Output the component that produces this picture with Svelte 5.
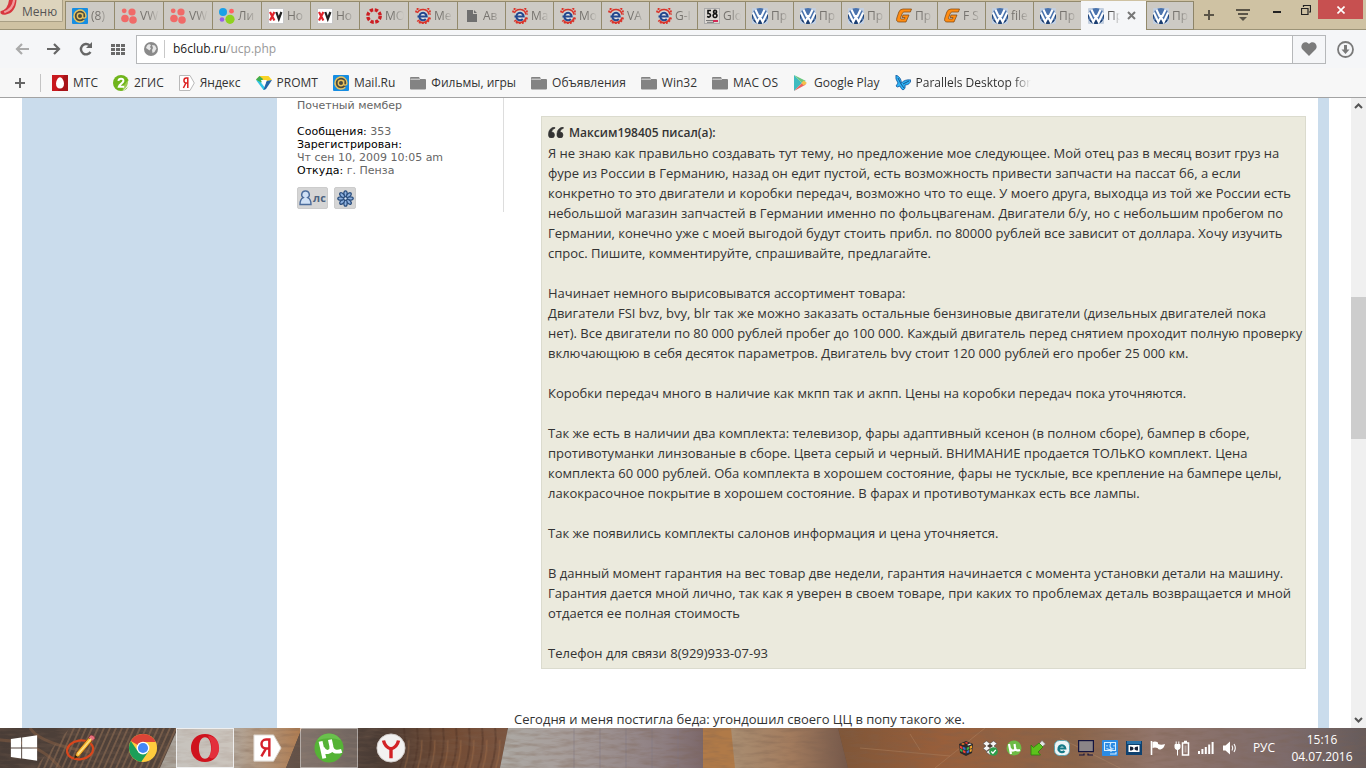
<script>
  const tabs = [
    { icon: 'mail', title: '(8)', wide: true },
    { icon: 'dots', title: 'VW', wide: true },
    { icon: 'dots', title: 'VW', wide: true },
    { icon: 'avito', title: 'Ли', wide: true },
    { icon: 'xv', title: 'Но', wide: true },
    { icon: 'xv', title: 'Но', wide: true },
    { icon: 'ring', title: 'МО', wide: true },
    { icon: 'exist', title: 'Ме', wide: true },
    { icon: 'doc', title: 'Ав' },
    { icon: 'exist', title: 'Ма' },
    { icon: 'exist', title: 'Мо' },
    { icon: 'exist', title: 'VA' },
    { icon: 'exist', title: 'G-I' },
    { icon: 'auto58', title: 'Glo' },
    { icon: 'vw', title: 'Пр' },
    { icon: 'vw', title: 'Пр' },
    { icon: 'vw', title: 'Пр' },
    { icon: 'g', title: 'Пр' },
    { icon: 'g', title: 'F S' },
    { icon: 'vw', title: 'file' },
    { icon: 'vw', title: 'Пр' },
    { icon: 'vw', title: 'Пр', active: true },
    { icon: 'vw', title: 'Пр' }
  ];
  const bookmarks = [
    ['mts', 'МТС'], ['gis', '2ГИС'], ['yandex', 'Яндекс'], ['promt', 'PROMT'],
    ['mail', 'Mail.Ru'], ['folder', 'Фильмы, игры'], ['folder', 'Объявления'],
    ['folder', 'Win32'], ['folder', 'MAC OS'], ['play', 'Google Play'],
    ['butterfly', 'Parallels Desktop for']
  ];
  const paragraphs = [
    'Я не знаю как правильно создавать тут тему, но предложение мое следующее. Мой отец раз в месяц возит груз на\nфуре из России в Германию, назад он едит пустой, есть возможность привести запчасти на пассат б6, а если\nконкретно то это двигатели и коробки передач, возможно что то еще. У моего друга, выходца из той же России есть\nнебольшой магазин запчастей в Германии именно по фольцвагенам. Двигатели б/у, но с небольшим пробегом по\nГермании, конечно уже с моей выгодой будут стоить прибл. по 80000 рублей все зависит от доллара. Хочу изучить\nспрос. Пишите, комментируйте, спрашивайте, предлагайте.',
    'Начинает немного вырисовыватся ассортимент товара:\nДвигатели FSI bvz, bvy, blr так же можно заказать остальные бензиновые двигатели (дизельных двигателей пока\nнет). Все двигатели по 80 000 рублей пробег до 100 000. Каждый двигатель перед снятием проходит полную проверку\nвключающюю в себя десяток параметров. Двигатель bvy стоит 120 000 рублей его пробег 25 000 км.',
    'Коробки передач много в наличие как мкпп так и акпп. Цены на коробки передач пока уточняются.',
    'Так же есть в наличии два комплекта: телевизор, фары адаптивный ксенон (в полном сборе), бампер в сборе,\nпротивотуманки линзованые в сборе. Цвета серый и черный. ВНИМАНИЕ продается ТОЛЬКО комплект. Цена\nкомплекта 60 000 рублей. Оба комплекта в хорошем состояние, фары не тусклые, все крепление на бампере целы,\nлакокрасочное покрытие в хорошем состояние. В фарах и противотуманках есть все лампы.',
    'Так же появились комплекты салонов информация и цена уточняется.',
    'В данный момент гарантия на вес товар две недели, гарантия начинается с момента установки детали на машину.\nГарантия дается мной лично, так как я уверен в своем товаре, при каких то проблемах деталь возвращается и мной\nотдается ее полная стоимость',
    'Телефон для связи 8(929)933-07-93'
  ];
  const tray = ['cube', 'dropbox', 'ut', 'usb', 'eset', 'screen', 'finder', 'dolby', 'flag', 'power', 'signal', 'sound'];
  const apps = [
    ['start', 'Пуск'], ['pencil', 'Рисование'], ['chrome', 'Chrome'], ['opera', 'Opera'],
    ['yabig', 'Яндекс'], ['utorrent', 'µTorrent'], ['yabrowser', 'Яндекс.Браузер']
  ];
  let address = $state('b6club.ru/ucp.php');
</script>

{#snippet icon(name)}
  <svg class="ico" viewBox="0 0 16 16" aria-hidden="true">
    {#if name === 'mail'}
      <rect width="16" height="16" rx="1" fill="#168de2" />
      <circle cx="8" cy="8" r="5.6" fill="#4c4a3c" />
      <path d="M12.3 12.2A6 6 0 1 1 14 8c0 2.6-3.3 2.8-3.3.4V5.6M10.7 8a2.7 2.7 0 1 1-5.4 0a2.7 2.7 0 0 1 5.4 0" fill="none" stroke="#e8c25c" stroke-width="1.4" />
    {:else if name === 'dots'}
      <g fill="#f06a68"><circle cx="3.2" cy="2.8" r="2.4" /><circle cx="11" cy="4" r="3.6" /><circle cx="4" cy="10.5" r="3.8" /><circle cx="12" cy="12" r="3.8" /></g>
    {:else if name === 'avito'}
      <circle cx="4" cy="4" r="4" fill="#1aa0e8" /><circle cx="12.5" cy="3.2" r="2.4" fill="#ff6163" /><circle cx="3" cy="11.5" r="2.3" fill="#965eeb" /><circle cx="11" cy="11.3" r="4.6" fill="#8fd11e" />
    {:else if name === 'xv'}
      <rect x=".5" y=".5" width="15" height="15" fill="#fff" stroke="#c9c9c9" />
      <path d="M2 4l4.400 8.500M6.400 4L2 12.500" stroke="#e0242c" stroke-width="2.200" /><path d="M8.300 4l2.500 7L13.400 4" stroke="#222" stroke-width="2.200" fill="none" />
    {:else if name === 'ring'}
      <circle cx="8" cy="8" r="6.200" fill="none" stroke="#cc1d22" stroke-width="3.400" stroke-dasharray="3.300 1.570" />
    {:else if name === 'exist'}
      <path d="M1 4.500A7 7 0 0 1 15 6.500M15 9.500A7 7 0 0 1 2.500 12.500" fill="none" stroke="#d9342b" stroke-width="2" stroke-dasharray="2 1" /><path d="M2.300 5A6.200 6.200 0 0 1 14 6.500M14 9.500A6.200 6.200 0 0 1 3 12" fill="none" stroke="#d9342b" stroke-width="1.500" />
      <circle cx="8" cy="8" r="4.800" fill="#e6e5e4" />
      <path d="M2.500 8.500h9.200A3.700 3.700 0 1 0 10.800 11" fill="none" stroke="#23488f" stroke-width="2" />
    {:else if name === 'doc'}
      <path d="M3 2h6v4h4v8H3zM10 2l3 3h-3z" fill="#6f6f6f" />
    {:else if name === 'auto58'}
      <rect x=".5" y=".5" width="15" height="15" fill="#ddd9d4" stroke="#aaa" />
      <path d="M7 2.500H4v3c3-.6 3.200 3.400.8 3.600L3 8.600M11 2.400a1.500 1.500 0 1 0 .1 0M11 5.700a1.900 1.900 0 1 0 .1 0" fill="none" stroke="#111" stroke-width="1.600" />
      <path d="M2 12.500h7M3 14.300h7" stroke="#777" /><path d="M9 13h5" stroke="#d22a55" stroke-width="2" />
    {:else if name === 'vw'}
      <rect width="16" height="16" rx="1" fill="#c3cfdf" /><circle cx="8" cy="8" r="8" fill="#4a73ad" />
      <path d="M0 8a8 8 0 0 0 16 0l-1-3v7H1V5z" fill="#193c70" />
      <path d="M3.400 1.500L6.500 8h3l3.100-6.500M.8 4.500L5.300 14 8 8.800l2.700 5.200 4.500-9.500" fill="none" stroke="#fff" stroke-width="2.100" />
    {:else if name === 'g'}
      <path d="M15.500 1H7Q4 1 2.800 4L.8 10q-1 4 2.200 4h7l3-7H7L6 9.500h3L8.500 11H5.200q-1 0-.6-1.500L6.500 5Q7 4 8 4h6.400z" fill="#ff8c12" stroke="#7a4310" stroke-width=".7" />
    {:else if name === 'mts'}
      <rect width="16" height="16" fill="#c8191e" /><path d="M12 0h4v16H6z" fill="#870f13" opacity=".5" /><path d="M8 2.200c2.500 0 4 4.200 4 6.600C12 12 10.500 13.600 8 13.600S4 12 4 8.800C4 6.400 5.500 2.200 8 2.200" fill="#fff" />
    {:else if name === 'gis'}
      <circle cx="8" cy="8" r="8" fill="#70b51c" /><path d="M16 5v6l-6 5 2-6z" fill="#f7f7f7" /><path d="M14.800 5.200Q16 11 9.500 15.500l1-4.500z" fill="#9ccc50" /><path d="M5.400 5.800C5.800 2.800 10.800 3 10.400 6c-.3 2.200-4 3.400-4.600 5.800h5.400" fill="none" stroke="#fff" stroke-width="2" />
    {:else if name === 'yandex'}
      <path d="M.5.500H11L15.300 8 11 15.500H.500z" fill="#fff" stroke="#b9b9b9" /><path d="M8.800 13V3H7.200C4.400 3 4 8 7.300 8h1.500M6.900 8L4.400 13" fill="none" stroke="#dd2222" stroke-width="1.500" />
    {:else if name === 'promt'}
      <path d="M0 4.500L3.500 1h9L16 5l-4.500 1z" fill="#f9d326" /><path d="M0 4.500L3.500 1 7 4 4.500 9z" fill="#3fae52" /><path d="M0 5l7.500 10 2.500-1-5.500-7z" fill="#2ec5e8" /><path d="M16 5L10 14l-2.500 1 3-9z" fill="#2266a8" /><path d="M4.800 5h6L8.500 11z" fill="#fff" />
    {:else if name === 'folder'}
      <path d="M0 3q0-1 1-1h8l1 2h5q1 0 1 1v8.500q0 1-1 1H1q-1 0-1-1z" fill="#838383" /><path d="M.4 4.200h9.600" stroke="#f7f7f7" stroke-width=".8" />
    {:else if name === 'play'}
      <path d="M1 0l8 8-8 8z" fill="#3fbcc0" /><path d="M1 0l12 6-4 2z" fill="#6bc77f" /><path d="M1 16l12-6.500L9 8z" fill="#ec625f" /><path d="M10.500 5.500L14 8l-3.500 2.500L8.500 8z" fill="#f5c04a" />
    {:else if name === 'butterfly'}
      <path d="M1 0q5 2 5.500 8Q10 4 16 5q-1 5-6 5 1 4-2 5-2-1-3-4-3 2-4 0L3 8Q0 4 1 0" fill="#2fb4f5" stroke="#10549c" stroke-width=".8" /><path d="M3 3l3 6 3 4M14 6L8 9" stroke="#123e74" stroke-width=".8" fill="none" />
    {:else if name === 'cube'}
      <path d="M1 4l7-3 7 3-1 9-6 3-6-3z" fill="#2a2a2a" /><path d="M3 4l2-1 2 1-2 1z" fill="#f37b28" /><path d="M6.500 2.700L8.500 2l2 1-2 1z" fill="#e33" /><path d="M9 5l3-1.500 1.500.7-3 1.300z" fill="#eee" />
      <path d="M1.800 5.500L4.500 6.700v2.500L2 8zM5 10l2.500 1v2.500L5 12.300z" fill="#f04038" /><path d="M5 6.800l2.500 1v2.500L5 9.200zM8.700 11l2.300-1v2.500l-2.300 1z" fill="#3b6fc9" /><path d="M8.700 7.800l2.300-1v2.400l-2.300 1zM2 8.800l2.500 1v2.400L2.200 11z" fill="#3bb24a" /><path d="M11.700 6.500l2.300-1V8l-2.300 1zM11.700 9.800l2-1v2.400l-2 1z" fill="#f4a52b" />
    {:else if name === 'dropbox'}
      <path d="M4.500 1L8 3.500 11.500 1 15 3.500 12 6l3 2.500-3.500 2.500L8 8.500 4.500 11 1 8.500 4 6 1 3.500zM4 12l4-2.500 4 2.500-4 3z" fill="#f5f5f5" stroke="#4a4a4a" stroke-width=".6" /><path d="M8 3.800L11 6 8 8 5 6z" fill="#4a4038" /><circle cx="11.500" cy="11.500" r="4.300" fill="#2d9e49" /><path d="M9.300 11.500l1.600 1.700 2.900-3.400" stroke="#fff" stroke-width="1.300" fill="none" />
    {:else if name === 'ut'}
      <circle cx="8" cy="8" r="7.500" fill="#6dbb45" /><path d="M3 4l2 10M4.200 8.500q1 2.500 3.300 2T9 7L8.500 4M9 8q1 3.500 5 2" fill="none" stroke="#fff" stroke-width="2.200" />
    {:else if name === 'usb'}
      <path d="M8 5l4-4.500L15.500 4 11 8z" fill="#e4e4e4" stroke="#666" stroke-width=".6" /><path d="M1 5l2.500 2.500L9 3l4 4-5 5 2.500 3H1z" fill="#5cc21c" stroke="#2f7d0c" stroke-width=".8" />
    {:else if name === 'eset'}
      <rect x=".5" y=".5" width="15" height="15" rx="5" fill="#eef4f5" stroke="#5aa1ac" /><path d="M4.500 8.500h6.800A3.400 3.400 0 1 0 10.500 11" fill="none" stroke="#167a88" stroke-width="2.200" />
    {:else if name === 'screen'}
      <rect x=".6" y=".6" width="14.800" height="11" fill="#8b8588" stroke="#15153f" stroke-width="1.200" /><path d="M1 15h5v-1.500M15 15h-5v-1.500" stroke="#15153f" stroke-width="1.200" fill="none" />
    {:else if name === 'finder'}
      <rect width="16" height="16" rx="1" fill="#2b8be3" /><path d="M2.500 2.500h11v8h-11zM9 2.500q-2 4 0 5.500v4M5 5v1.500M12 5v1.500M4.500 8.500q3.500 2 7 0M8 14h6v-2" stroke="#d8efff" stroke-width="1.100" fill="none" />
    {:else if name === 'dolby'}
      <rect y="1" width="16" height="14" fill="#0e416f" /><rect x="1" y="1" width="14" height="3" fill="#2a72a9" /><path d="M2.500 5h11v7h-11z" fill="#fff" /><path d="M4 6.500v4q3.500 0 3.500-2T4 6.500M12 6.500v4q-3.500 0-3.500-2t3.500-2" fill="#17233a" />
    {:else if name === 'flag'}
      <path d="M1.500 1v14" stroke="#fff" stroke-width="1.600" /><path d="M2.500 2q3-1 5.500.500v1.500q3 1.500 7 0-1 4.500-4.500 5.500-2 .500-3-1.500-2.500-.800-5 0z" fill="#fff" />
    {:else if name === 'power'}
      <path d="M8.500 3h6v12h-6zM10 1.500h3" fill="none" stroke="#fff" stroke-width="1.500" /><path d="M10.500 5.500h2v7h-2z" fill="#fff" opacity=".35" /><path d="M1 4.500h5v3q0 2-2.500 2T1 7.500zM2.200 1.500v3M4.800 1.500v3M3.500 9v6.500" fill="#fff" stroke="#fff" />
    {:else if name === 'signal'}
      <path d="M0 11h2v3H0zM3.400 9h2v5h-2zM6.800 7h2v7h-2zM10.200 4.500h2V14h-2zM13.600 2h2v12h-2z" fill="#fff" />
    {:else if name === 'sound'}
      <path d="M1 5.500h2.500L8 1.500v13l-4.500-4H1z" fill="#fff" /><path d="M10 5.500q1.500 2.500 0 5M12 4q2.600 4 0 8" fill="none" stroke="#fff" stroke-width="1.100" />
    {/if}
  </svg>
{/snippet}

{#snippet appIcon(name)}
  <svg class="app-ico" viewBox="0 0 32 32" aria-hidden="true">
    {#if name === 'start'}
      <path d="M2 6.500l11-1.600v10.600H2zM14 4.700L30 2.500v13H14zM2 16.500h11v10.600L2 25.500zM14 16.500h16v13l-16-2.300z" fill="#fff" />
    {:else if name === 'pencil'}
      <ellipse cx="15" cy="18" rx="14" ry="10" fill="none" stroke="#d9461c" stroke-width="2.400" transform="rotate(-8 15 18)" />
      <path d="M9 27l2-6L25 4l4 3-15 18z" fill="#f7b531" stroke="#6b3c14" stroke-width=".8" /><path d="M24 5l2.500-3q4 .5 4.500 3.500L28.500 8.500z" fill="#e86f7c" stroke="#7b2630" stroke-width=".6" /><path d="M12.500 23L27 6" stroke="#fbe28a" stroke-width="1.500" /><path d="M9 27l1-3.500 2.500 2z" fill="#2b1b10" />
    {:else if name === 'chrome'}
      <circle cx="16" cy="16" r="15" fill="#ffcb3d" /><path d="M16 16L3 8.500A15 15 0 0 1 29.500 9.500H16z" fill="#dc4437" /><path d="M3 8.500a15 15 0 0 0 11 22.300L22 19.500 16 16 10 19z" fill="#1b9e58" /><circle cx="16" cy="16" r="6.800" fill="#fff" /><circle cx="16" cy="16" r="5.400" fill="#4387f5" />
    {:else if name === 'opera'}
      <path fill-rule="evenodd" d="M16 1C25 1 31 7.500 31 16s-6 15-15 15S1 24.500 1 16 7 1 16 1m0 3.500c-4 0-6.500 5-6.500 11.500S12 27.500 16 27.500 22.500 22.500 22.500 16 20 4.500 16 4.500" fill="#cf131e" /><path d="M20 3C27 4 31 9 31 16c0 6-3 10-6 11-1.500.5-4-.5-5-2 4-5 4-15 0-20q-1-1 0-2" fill="#f04450" opacity=".6" />
    {:else if name === 'yabig'}
      <path d="M2 2h21l8 14-8 14H2z" fill="#fff" stroke="#d8d0c8" /><path d="M18.500 25V7H15c-6.500 0-6.500 9.500 0 9.500h3.500M15 16.500L10 25" fill="none" stroke="#d6202b" stroke-width="2.600" />
    {:else if name === 'utorrent'}
      <circle cx="16" cy="16" r="15.500" fill="#55b336" /><path d="M3 8a15 15 0 0 1 26 0q-12-5-26 0" fill="#80cf63" opacity=".5" /><path d="M7 9l4 18M9 16q2.500 5 6.500 4t3-6L17 7M18.500 15q2 7 11 4" fill="none" stroke="#fff" stroke-width="4.200" />
    {:else}
      <circle cx="16" cy="16" r="15" fill="#f2f1f0" stroke="#cfcac6" /><path d="M16 27V17M8 8q1.500 7 8 9 6.500-2 8-9" fill="none" stroke="#d22125" stroke-width="3.600" />
    {/if}
  </svg>
{/snippet}

<div class="browser">
  <header class="strip">
    <button class="menu">
      <svg viewBox="0 0 17 18" aria-hidden="true"><path d="M0 12Q8 10 9 0h8q-1 14-12 15.500Q2 16 0 14z" fill="#d8363e" /><path d="M14.500 0Q13 10 4 13" fill="none" stroke="#f0999b" stroke-width="2.400" /></svg>
      Меню
    </button>
    <nav class="tabs" aria-label="Вкладки">
      {#each tabs as tab}
        <button class="tab" class:wide={tab.wide} class:active={tab.active}>
          {@render icon(tab.icon)}
          <span class="title">{tab.title}</span>
          {#if tab.active}
            <svg class="close-tab" viewBox="0 0 9 9" aria-hidden="true"><path d="M1 1l7 7M8 1L1 8" stroke="#777" stroke-width="2" /></svg>
          {/if}
        </button>
      {/each}
    </nav>
    <div class="strip-tools">
      <button aria-label="Новая вкладка"><svg width="10" height="10" viewBox="0 0 10 10"><path d="M5 0v10M0 5h10" stroke="#5b5548" stroke-width="2" /></svg></button>
      <button aria-label="Список вкладок"><svg width="14" height="12" viewBox="0 0 14 12"><path d="M0 1h14M2 5h10" stroke="#5b5548" stroke-width="2" /><path d="M3 8h8l-4 4z" fill="#5b5548" /></svg></button>
    </div>
    <div class="window-tools">
      <button class="min" aria-label="Свернуть"><svg width="8" height="2" viewBox="0 0 8 2"><path d="M0 0h8v2H0z" fill="#222" /></svg></button>
      <button class="restore" aria-label="Развернуть"><svg width="10" height="10" viewBox="0 0 10 10"><path d="M.5 3.500h6.500V9.500H.5zM2.500 2V.5h7v6.500H8" fill="none" stroke="#222" stroke-width="1.200" /></svg></button>
      <button class="close" aria-label="Закрыть"><svg width="8" height="8" viewBox="0 0 8 8"><path d="M.5.5l7 7M7.500.5l-7 7" stroke="#fff" stroke-width="1.600" /></svg></button>
    </div>
  </header>

  <div class="toolbar">
    <button aria-label="Назад"><svg width="14" height="12" viewBox="0 0 14 12"><path d="M14 6H2M7 1L2 6l5 5" fill="none" stroke="#ababab" stroke-width="2.200" /></svg></button>
    <button aria-label="Вперёд"><svg width="14" height="12" viewBox="0 0 14 12"><path d="M0 6h12M7 1l5 5-5 5" fill="none" stroke="#666" stroke-width="2.200" /></svg></button>
    <button aria-label="Обновить"><svg width="14" height="14" viewBox="0 0 14 14"><path d="M11.500 10A5.200 5.200 0 1 1 10.500 3.200" fill="none" stroke="#666" stroke-width="2.400" /><path d="M13 0v6H7z" fill="#666" /></svg></button>
    <button aria-label="Экспресс-панель"><svg width="14" height="11" viewBox="0 0 14 11"><path d="M0 1.500h14M0 5.500h14M0 9.500h14" stroke="#6a6a6a" stroke-width="3" stroke-dasharray="4 1" /></svg></button>
    <div class="address">
      <svg class="globe" viewBox="0 0 14 14" aria-hidden="true"><circle cx="7" cy="7" r="7" fill="#8a8a8a" /><path d="M3 3.500l2-1.500 2 1-1 2 1 1.500-1.500 2L3.500 7 2 6zM8 3l3 .5 1.500 3-2 3.500-2 1-.5-3 1-2z" fill="#e6e6e6" /></svg>
      <div class="field">
        <div class="url" aria-hidden="true">{address.split('/')[0]}<span>/{address.split('/')[1] ?? ''}</span></div>
        <input aria-label="Адрес" bind:value={address} />
      </div>
      <button class="heart" aria-label="В избранное"><svg width="16" height="14" viewBox="0 0 16 14"><path d="M8 14L1.300 7.300C-2 3 4-2.500 8 2c4-4.500 10 1 6.700 5.300z" fill="#7b7b7b" /></svg></button>
    </div>
    <button class="downloads" aria-label="Загрузки"><svg width="17" height="17" viewBox="0 0 17 17"><circle cx="8.500" cy="8.500" r="7.500" fill="none" stroke="#7a7a7a" stroke-width="1.800" /><path d="M7 4h3v4.500h2.500L8.500 13l-4-4.500H7z" fill="#7a7a7a" /></svg></button>
  </div>

  <nav class="bookmarks" aria-label="Закладки">
    <button class="add" aria-label="Добавить закладку"><svg width="10" height="10" viewBox="0 0 10 10"><path d="M5 0v10M0 5h10" stroke="#666" stroke-width="2" /></svg></button>
    {#each bookmarks as [name, label], i}
      <a href="#top" class:last={i === bookmarks.length - 1}>{@render icon(name)}<span>{label}</span></a>
    {/each}
  </nav>

  <div class="viewport">
    <main class="page">
      <article class="post">
        <aside class="profile">
          <p class="rank">Почетный мембер</p>
          <p><b>Сообщения:</b> 353</p>
          <p><b>Зарегистрирован:</b></p>
          <p>Чт сен 10, 2009 10:05 am</p>
          <p><b>Откуда:</b> г. Пенза</p>
          <div class="contacts">
            <button class="pm" aria-label="Личное сообщение">
              <svg width="13" height="16" viewBox="0 0 13 16" aria-hidden="true"><path d="M6.500 1a3.600 3.600 0 0 1 2.200 6.600Q12 9 12 14.500H1Q1 9 4.300 7.600A3.600 3.600 0 0 1 6.500 1" fill="#cfe0f5" stroke="#4b6c9c" stroke-width="1.400" /></svg>лс
            </button>
            <button aria-label="ICQ">
              <svg width="17" height="17" viewBox="-8.500 -8.500 17 17" aria-hidden="true">
                {#each [0, 45, 90, 135, 180, 225, 270, 315] as a}
                  <ellipse cx="0" cy="-4.700" rx="1.700" ry="3" fill="#8fb2e0" stroke="#2d507f" stroke-width="1.300" transform="rotate({a})" />
                {/each}
                <circle r="1.600" fill="#d9e7f8" stroke="#2d507f" />
              </svg>
            </button>
          </div>
        </aside>
        <section class="content">
          <blockquote>
            <cite><svg width="16" height="11" viewBox="0 0 16 11" aria-hidden="true"><path d="M6.500 0Q1 1 .5 6.500 0 11 3.500 11 6.500 11 6.500 8T3.500 5Q4 2 7 1.200zM15 0Q9.500 1 9 6.500 8.500 11 12 11q3 0 3-3t-3-3Q12.500 2 15.500 1.200z" fill="#333" stroke="#333" stroke-width=".6" /></svg>Максим198405 писал(а):</cite>
            {#each paragraphs as text}<p>{text}</p>{/each}
          </blockquote>
          <p class="reply">Сегодня и меня постигла беда: угондошил своего ЦЦ в попу такого же.</p>
        </section>
      </article>
    </main>
    <div class="scrollbar" aria-hidden="true">
      <svg width="9" height="6" viewBox="0 0 9 6"><path d="M1 5l3.500-3.500L8 5" fill="none" stroke="#555" stroke-width="2" /></svg>
      <div class="track"><div class="thumb"></div></div>
      <svg width="9" height="6" viewBox="0 0 9 6"><path d="M1 1l3.500 3.500L8 1" fill="none" stroke="#555" stroke-width="2" /></svg>
    </div>
  </div>

  <footer class="taskbar">
    <svg class="wood" viewBox="0 0 1366 40" preserveAspectRatio="none" aria-hidden="true">
      <defs>
        <linearGradient id="w1"><stop offset="0" stop-color="#493d37" /><stop offset=".4" stop-color="#685243" /><stop offset="1" stop-color="#5b493e" /></linearGradient>
        <linearGradient id="w2"><stop offset="0" stop-color="#a9a49c" /><stop offset=".5" stop-color="#b2a89d" /><stop offset="1" stop-color="#b07c50" /></linearGradient>
        <linearGradient id="w3"><stop offset="0" stop-color="#66544a" /><stop offset=".4" stop-color="#493b34" /><stop offset=".75" stop-color="#724b34" /><stop offset="1" stop-color="#7b5540" /></linearGradient>
        <linearGradient id="w4"><stop offset="0" stop-color="#adaaa5" /><stop offset=".3" stop-color="#a79e9b" /><stop offset=".8" stop-color="#8e7f82" /><stop offset="1" stop-color="#7c686a" /></linearGradient>
        <linearGradient id="w5"><stop offset="0" stop-color="#a98e72" /><stop offset=".5" stop-color="#a37c5e" /><stop offset="1" stop-color="#75584a" /></linearGradient>
        <linearGradient id="w6"><stop offset="0" stop-color="#7f5638" /><stop offset=".2" stop-color="#995f3b" /><stop offset=".45" stop-color="#8c654a" /><stop offset=".6" stop-color="#91756b" /><stop offset=".85" stop-color="#7d6b6b" /><stop offset="1" stop-color="#665b5b" /></linearGradient>
        <pattern id="ribs" width="6" height="40" patternUnits="userSpaceOnUse" patternTransform="skewX(-24)"><path d="M2 0v40" stroke="#a1795a" stroke-width="2" opacity=".45" /></pattern>
        <pattern id="bark" width="13" height="40" patternUnits="userSpaceOnUse" patternTransform="skewX(-6)"><path d="M1 0q5 20 0 40" stroke="#432b20" stroke-width="2" opacity=".4" fill="none" /><path d="M7 12q2 14-1 28" stroke="#b37a4c" stroke-width="1.500" opacity=".35" fill="none" /></pattern>
        <pattern id="carve" width="26" height="40" patternUnits="userSpaceOnUse"><path d="M2 0v40" stroke="#7c7684" stroke-width="1.500" opacity=".35" /></pattern>
        <filter id="grain" x="0" y="0" width="100%" height="100%"><feTurbulence type="fractalNoise" baseFrequency=".05 .25" numOctaves="3" seed="4" /><feColorMatrix values="0 0 0 0 .2  0 0 0 0 .12  0 0 0 0 .08  1.600 0 0 0 -.65" /></filter>
      </defs>
      <rect width="1366" height="40" fill="url(#w1)" />
      <path d="M70 0h108l-18 40H34z" fill="url(#ribs)" />
      <path d="M0 12q40 2 60 28M30 0q10 16 60 24" stroke="#9b6a47" stroke-width="3" fill="none" opacity=".4" />
      <path d="M178 0h124l-16 40H160z" fill="url(#w2)" />
      <path d="M302 0h206l-8 40H286z" fill="url(#w3)" /><path d="M400 0h108l-8 40H395z" fill="url(#bark)" />
      <path d="M508 0h195v40H500z" fill="url(#w4)" /><path d="M550 0h152v40H550z" fill="url(#carve)" />
      <path d="M703 0h30l5 40h-35z" fill="#b07a48" />
      <path d="M731 0h107l10 40H735z" fill="url(#w5)" />
      <path d="M838 0h528v40H848z" fill="url(#w6)" />
      <path d="M910 6l10 16M985 0l-50 40M1060 10l60 30M860 20l90 8" stroke="#c29a76" opacity=".3" />
      <rect width="1366" height="40" filter="url(#grain)" opacity=".5" />
    </svg>
    <div class="apps">
      {#each apps as [name, label]}
        <button class={name} aria-label={label}>{@render appIcon(name)}</button>
      {/each}
    </div>
    <div class="tray">
      {#each tray as name}<span>{@render icon(name)}</span>{/each}
    </div>
    <span class="lang">РУС</span>
    <time class="clock"><span>15:16</span><span>04.07.2016</span></time>
  </footer>
</div>

<style>
  :global(body) { margin: 0; overflow: hidden; }
  * { box-sizing: border-box; }
  button { border: 0; padding: 0; background: none; font: inherit; color: inherit; display: flex; align-items: center; justify-content: center; }
  p { margin: 0; }
  svg { display: block; flex: none; }
  .ico { width: 16px; height: 16px; }
  .browser { height: 100vh; display: flex; flex-direction: column; background: #fff; font: 12px/16px "Segoe UI", "Open Sans", sans-serif; color: #333; }

  .strip { height: 30px; flex: none; display: flex; background: #cfc2a3; border-bottom: 1px solid #9c9377; }
  .menu { width: 63px; height: 22px; align-items: flex-start; justify-content: flex-start; gap: 5px; background: #ddd4bd; border: 1px solid #a99f85; border-top: 0; border-left: 0; border-radius: 0 0 2px 0; margin-right: 2px; line-height: 24px; color: #555; }
  .menu svg { width: 17px; height: 17px; }
  .tabs { flex: 1; min-width: 0; display: flex; padding-top: 1px; margin-bottom: -1px; }
  .tab { flex: 1 1 48px; min-width: 0; justify-content: flex-start; gap: 3px; padding: 0 4px 0 6px; background: #cdcac4; border: 1px solid #938a6c; border-right: 0; color: #77746f; }
  .tab:last-child { border-right: 1px solid #8d8468; }
  .tab.wide { flex-basis: 49px; }
  .tab.active { flex-basis: 65px; background: #f5f6f8; border-color: transparent; color: #555; }
  .title { flex: 1; min-width: 0; overflow: hidden; white-space: nowrap; text-align: left; -webkit-mask-image: linear-gradient(90deg, #000 40%, transparent); mask-image: linear-gradient(90deg, #000 40%, transparent); }
  .close-tab { width: 9px; height: 9px; margin: 0 6px 0 4px; }
  .strip-tools { display: flex; width: 66px; gap: 4px; }
  .strip-tools button { width: 30px; }
  .window-tools { width: 106px; display: flex; align-items: flex-start; padding-right: 3px; }
  .window-tools button { height: 19px; }
  .min { width: 34px; padding-top: 5px; }
  .restore { flex: 1; }
  .close { width: 45px; background: #c75050; }

  .toolbar { height: 38px; flex: none; display: flex; align-items: center; padding: 0 6px; background: #f5f6f8; }
  .toolbar > button { width: 32px; height: 28px; }
  .toolbar > .downloads { width: 34px; padding-left: 4px; }
  .address { flex: 1; height: 29px; margin-left: 2px; display: flex; align-items: center; background: #fff; border: 1px solid #b6b8ba; }
  .globe { width: 14px; height: 14px; margin: 0 6px 0 7px; }
  .field { flex: 1; display: grid; border-left: 1px solid #c8c8c8; padding-left: 8px; }
  .url, .field input { grid-area: 1 / 1; font: 12px/18px "Segoe UI", "Open Sans", sans-serif; }
  .url { color: #222; }
  .url span { color: #999; }
  .field input { border: 0; padding: 0; background: none; outline: 0; color: transparent; caret-color: #222; min-width: 0; }
  .heart { width: 33px; align-self: stretch; background: #f5f6f8; border-left: 1px solid #b6b8ba; }

  .bookmarks { height: 30px; flex: none; display: flex; align-items: center; gap: 15px; padding-right: 322px; background: #f7f7f7; border-bottom: 1px solid #a3a3a3; white-space: nowrap; }
  .bookmarks a { display: flex; align-items: center; gap: 5px; color: #333; text-decoration: none; }
  .add { width: 41px; height: 18px; border-right: 1px solid #c4c4c4; margin-right: -4px; flex: none; }
  .last { min-width: 0; }
  .last span { overflow: hidden; -webkit-mask-image: linear-gradient(90deg, #000 85%, transparent); mask-image: linear-gradient(90deg, #000 85%, transparent); }

  .viewport { flex: 1; min-height: 0; display: flex; overflow: hidden; }
  .page { flex: 1; min-width: 0; margin: 0 22px; padding: 0 11px 0 255px; background: #cadcec; overflow: hidden; }
  .post { min-height: 100%; display: flex; align-items: flex-start; background: #fff; }
  .profile { width: 227px; height: 114px; flex: none; border-right: 1px solid #ddd; padding: 1px 0 0 20px; font: 11px/13px Verdana, "DejaVu Sans", sans-serif; color: #666; }
  .profile .rank { margin-bottom: 13px; }
  .profile b { font-weight: 400; color: #000; }
  .contacts { display: flex; gap: 6px; margin-top: 10px; }
  .contacts button { width: 22px; height: 22px; border: 1px solid #ccc; border-radius: 2px; background: #d5d5d5; }
  .contacts .pm { width: 31px; gap: 1px; font: bold 11px/12px "Open Sans", sans-serif; color: #4d6380; }
  .content { flex: 1; min-width: 0; padding: 18px 12px 0 10px; font: 13px/20px "Trebuchet MS", "Open Sans", sans-serif; color: #333; }
  blockquote { margin: 0 0 40px 27px; padding: 5px 6px; background: #ebeadd; border: 1px solid #dbdbce; }
  blockquote p { white-space: pre; }
  blockquote p + p { margin-top: 20px; }
  cite { display: flex; align-items: center; gap: 5px; height: 21px; font-style: normal; font-weight: 600; font-size: 12px; }

  .scrollbar { width: 15px; flex: none; display: flex; flex-direction: column; align-items: center; gap: 6px; padding: 5px 0; background: #f0f0f0; }
  .track { flex: 1; align-self: stretch; display: grid; grid-template-rows: 182fr 142fr 272fr; }
  .thumb { grid-row: 2; background: #cdcdcd; }

  .taskbar { position: relative; height: 40px; flex: none; display: flex; align-items: center; color: #fff; }
  .wood { position: absolute; inset: 0; width: 100%; height: 100%; }
  .taskbar > :not(.wood) { position: relative; }
  .apps { display: flex; gap: 4px; height: 40px; flex: 1; }
  .apps button { width: 58px; border: 1px solid transparent; }
  .apps .start { width: 48px; }
  .apps .opera { background: #ffffff55; border-color: #eee; }
  .apps .utorrent { background: #ffffff33; border-color: #ffffff66; }
  .app-ico { width: 30px; height: 30px; }
  .tray { display: flex; gap: 8px; }
  .lang { width: 52px; text-align: center; }
  .clock { width: 76px; padding-right: 12px; display: flex; flex-direction: column; align-items: center; line-height: 17px; }
</style>
